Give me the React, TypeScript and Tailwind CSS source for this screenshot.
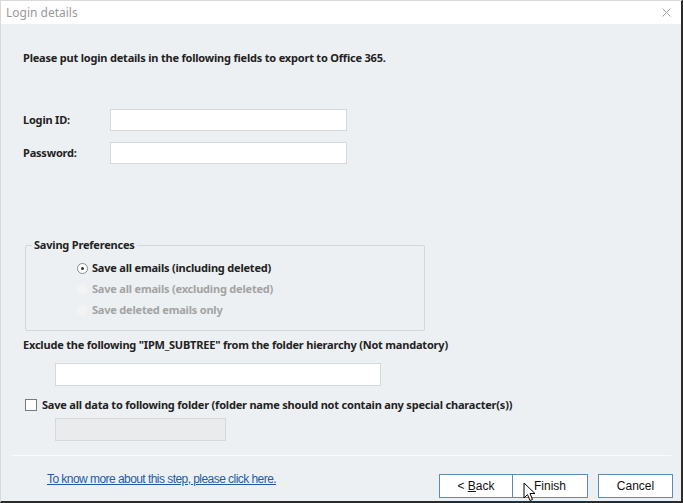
import React from 'react';

const body = { fontFamily: '"Noto Sans", "Open Sans", sans-serif' };
const ui = { fontFamily: '"Liberation Sans", Arial, sans-serif' };

function Radio({ checked, disabled, label }: { checked?: boolean; disabled?: boolean; label: string }) {
  return (
    <div className="flex items-center h-[21px]">
      <span
        className={`w-[11px] h-[11px] rounded-full flex items-center justify-center ${
          disabled ? 'bg-[#f2f3f5] border border-[#f2f3f5]' : 'bg-white border border-[#8c8c8c]'
        }`}
      >
        {checked && <span className="w-[3px] h-[3px] rounded-full bg-[#333]" />}
      </span>
      <span className={`ml-[4px] text-[11px] font-bold tracking-[-0.2px] ${disabled ? 'text-[#a3a3a3]' : 'text-[#222]'}`}>
        {label}
      </span>
    </div>
  );
}

function Cursor() {
  return (
    <svg width="13" height="20" viewBox="0 0 13 20" className="absolute left-[522px] top-[481px]">
      <path d="M1 1 L1 16 L4.5 12.5 L7 18.5 L9.5 17.5 L7 11.5 L12 11.5 Z" fill="#fff" stroke="#000" strokeWidth="1" strokeLinejoin="round" />
    </svg>
  );
}

export default function App() {
  return (
    <div
      className="relative w-[683px] h-[503px] bg-[#edf0f2] border-l border-t border-[#d9d9d9] border-r-2 border-b-2 border-r-[#2b2b2b] border-b-[#2b2b2b] overflow-hidden"
      style={body}
    >
      {/* title bar */}
      <div className="h-[23px] bg-white flex items-center justify-between pl-[5px] pr-[10px]">
        <span className="text-[12px] text-[#9a9a9a]">Login details</span>
        <svg width="9" height="9" viewBox="0 0 9 9">
          <path d="M0.5 0.5 L8.5 8.5 M8.5 0.5 L0.5 8.5" stroke="#a0a0a0" strokeWidth="1" />
        </svg>
      </div>

      <div className="pl-[22px] pt-[25px] text-[11px] font-bold text-[#222] tracking-[-0.2px]">
        <p className="leading-[18px]">Please put login details in the following fields to export to Office 365.</p>

        <div className="mt-[42px] flex flex-col gap-[11px]">
          <div className="flex items-center">
            <span className="w-[87px]">Login ID:</span>
            <div className="w-[237px] h-[22px] bg-white border border-[#d6d8da]" />
          </div>
          <div className="flex items-center">
            <span className="w-[87px]">Password:</span>
            <div className="w-[237px] h-[22px] bg-white border border-[#d6d8da]" />
          </div>
        </div>

        {/* saving preferences */}
        <div className="relative mt-[81px] ml-[2px] w-[400px] h-[86px] border border-[#d5d8db] rounded-[2px]">
          <span className="absolute -top-[9px] left-[6px] px-[2px] bg-[#edf0f2]">Saving Preferences</span>
          <div className="pl-[51px] pt-[12px] flex flex-col">
            <Radio checked label="Save all emails (including deleted)" />
            <Radio disabled label="Save all emails (excluding deleted)" />
            <Radio disabled label="Save deleted emails only" />
          </div>
        </div>

        <p className="mt-[5px] leading-[18px]">
          Exclude the following "IPM_SUBTREE" from the folder hierarchy (Not mandatory)
        </p>
        <div className="mt-[9px] ml-[32px] w-[326px] h-[23px] bg-white border border-[#d6d8da]" />

        <div className="mt-[11px] ml-[2px] flex items-center">
          <span className="w-[12px] h-[12px] bg-white border border-[#7a7a7a]" />
          <span className="ml-[5px]">
            Save all data to following folder (folder name should not contain any special character(s))
          </span>
        </div>
        <div className="mt-[4px] ml-[32px] w-[171px] h-[23px] bg-[#e9ebed] border border-[#d6d8da]" />
      </div>

      <div className="mt-[14px] mx-[10px] h-px bg-[#fafbfc]" />

      <div className="flex items-start pl-[46px] pr-[8px] mt-[18px]" style={ui}>
        <a href="#" className="mt-[-2px] text-[12px] leading-[14px] text-[#1b5ea6] underline tracking-[-0.55px]">
          To know more about this step, please click here.
        </a>
        <div className="ml-auto flex">
          <button className="w-[74px] h-[24px] bg-white border border-[#5b8bb7] text-[12px] text-[#111]">
            &lt; <span className="underline">B</span>ack
          </button>
          <button className="w-[75px] h-[24px] bg-white border border-[#5b8bb7] border-l-0 text-[12px] text-[#111]">
            Finish
          </button>
          <button className="ml-[10px] w-[75px] h-[24px] bg-white border border-[#5b8bb7] text-[12px] text-[#111]">
            Cancel
          </button>
        </div>
      </div>

      <Cursor />
    </div>
  );
}
